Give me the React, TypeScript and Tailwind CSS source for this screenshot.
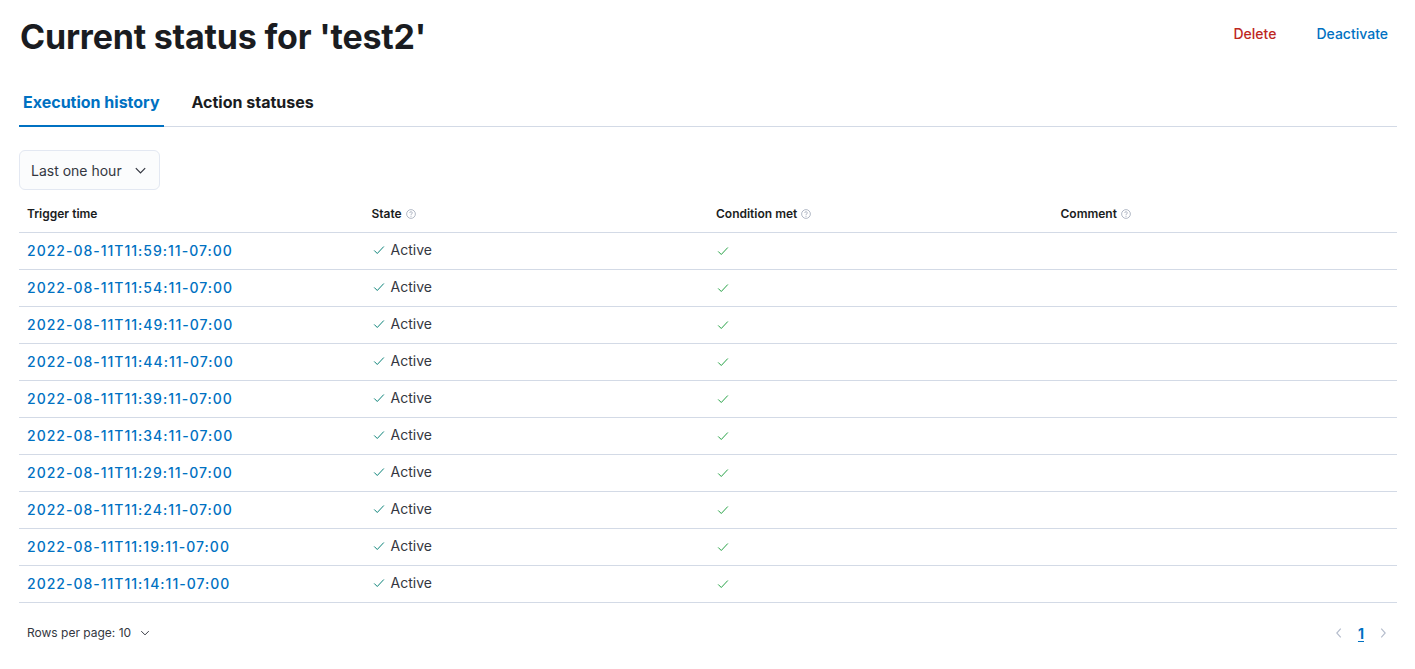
import React from 'react';

const rows = [
  '2022-08-11T11:59:11-07:00',
  '2022-08-11T11:54:11-07:00',
  '2022-08-11T11:49:11-07:00',
  '2022-08-11T11:44:11-07:00',
  '2022-08-11T11:39:11-07:00',
  '2022-08-11T11:34:11-07:00',
  '2022-08-11T11:29:11-07:00',
  '2022-08-11T11:24:11-07:00',
  '2022-08-11T11:19:11-07:00',
  '2022-08-11T11:14:11-07:00',
];

function Check({ className }: { className?: string }) {
  return (
    <svg width="14" height="14" viewBox="0 0 16 16" className={className} fill="none">
      <path d="M2.5 8.5l3.5 3.5 7.5-8" stroke="currentColor" strokeWidth="1.1" />
    </svg>
  );
}

function Help() {
  return (
    <svg width="10" height="10" viewBox="0 0 16 16" className="text-[#98a2b3] ml-1" fill="none">
      <circle cx="8" cy="8" r="7" stroke="currentColor" strokeWidth="1.2" />
      <path d="M6 6.3a2 2 0 1 1 2.6 1.9c-.4.2-.6.5-.6.9v.8" stroke="currentColor" strokeWidth="1.2" />
      <circle cx="8" cy="11.6" r=".8" fill="currentColor" />
    </svg>
  );
}

function Chevron({ size = 14 }: { size?: number }) {
  return (
    <svg width={size} height={size} viewBox="0 0 16 16" fill="none">
      <path d="M3 5.5l5 5 5-5" stroke="currentColor" strokeWidth="1.3" />
    </svg>
  );
}

export default function App() {
  return (
    <div className="w-[1415px] h-[669px] bg-white px-[19px] pt-[17px] text-[#343741]" style={{ fontFamily: 'Inter, "Noto Sans", sans-serif' }}>
      <div className="flex items-start justify-between">
        <h1 className="text-[34px] leading-[40px] font-bold text-[#1a1c21] pl-[1px] tracking-[-0.2px]">Current status for 'test2'</h1>
        <div className="flex items-center gap-[40px] pr-[8px] pt-[6px] text-[14px] font-medium">
          <button className="text-[#bd271e]">Delete</button>
          <button className="text-[#0071c2]">Deactivate</button>
        </div>
      </div>

      <div className="mt-[33px] flex border-b border-[#d3dae6] w-[1378px]">
        <div className="px-[4px] pb-[11px] border-b-2 border-[#0071c2] -mb-px text-[16px] font-bold text-[#0071c2] leading-[24px]">Execution history</div>
        <div className="ml-[28px] pb-[11px] text-[16px] font-bold text-[#1a1c21] leading-[24px]">Action statuses</div>
      </div>

      <div className="mt-[23px] w-[141px] h-[40px] border border-[#e3e8f2] rounded-[6px] bg-[#fbfcfd] flex items-center justify-between px-[11px] text-[14px] text-[#343741]">
        <span>Last one hour</span>
        <Chevron size={15} />
      </div>

      <table className="mt-[7px] w-[1378px] table-fixed border-collapse">
        <thead>
          <tr className="border-b border-[#d3dae6] h-[35px]">
            <th className="text-left text-[12px] font-semibold text-[#1a1c21] px-[8px] align-middle">Trigger time</th>
            <th className="text-left text-[12px] font-semibold text-[#1a1c21] px-[8px] align-middle">
              <span className="inline-flex items-center">State<Help /></span>
            </th>
            <th className="text-left text-[12px] font-semibold text-[#1a1c21] px-[8px] align-middle">
              <span className="inline-flex items-center">Condition met<Help /></span>
            </th>
            <th className="text-left text-[12px] font-semibold text-[#1a1c21] px-[8px] align-middle">
              <span className="inline-flex items-center">Comment<Help /></span>
            </th>
          </tr>
        </thead>
        <tbody>
          {rows.map((t) => (
            <tr key={t} className="border-b border-[#d3dae6] h-[37px]">
              <td className="px-[8px] text-[14px] font-medium text-[#0071c2] tracking-[1px]">{t}</td>
              <td className="px-[8px] text-[14px] text-[#343741]">
                <span className="inline-flex items-center gap-[5px]">
                  <Check className="text-[#017d73]" />
                  Active
                </span>
              </td>
              <td className="px-[8px]">
                <Check className="text-[#1e9e3e]" />
              </td>
              <td className="px-[8px]"></td>
            </tr>
          ))}
        </tbody>
      </table>

      <div className="mt-[20px] flex items-center justify-between w-[1378px]">
        <div className="flex items-center gap-[8px] pl-[8px] text-[12px] text-[#343741]">
          <span>Rows per page: 10</span>
          <Chevron size={12} />
        </div>
        <div className="flex items-center gap-[9px] pr-[8px] text-[14px]">
          <svg width="12" height="14" viewBox="0 0 12 16" fill="none" className="text-[#b4bccc]">
            <path d="M8 3L3.5 8 8 13" stroke="currentColor" strokeWidth="1.3" />
          </svg>
          <span className="text-[#0071c2] font-bold underline underline-offset-2 px-[4px]">1</span>
          <svg width="12" height="14" viewBox="0 0 12 16" fill="none" className="text-[#b4bccc]">
            <path d="M4 3l4.5 5L4 13" stroke="currentColor" strokeWidth="1.3" />
          </svg>
        </div>
      </div>
    </div>
  );
}
